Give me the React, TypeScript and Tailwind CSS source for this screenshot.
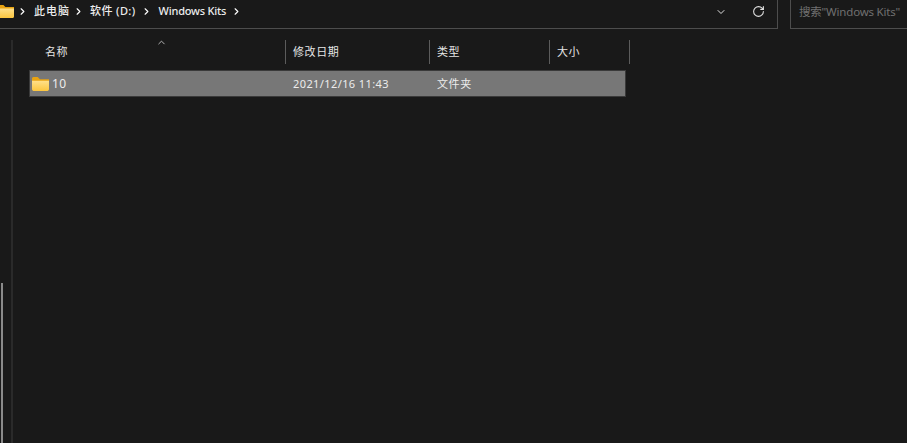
import { ChevronDown, ChevronRight, ChevronUp, RotateCw } from "lucide-react";

const Folder = ({ className, id }: { className: string; id: string }) => (
  <svg viewBox="0 0 16 13" className={className}>
    <defs>
      <linearGradient id={id} x1="0" y1="0" x2="0" y2="1">
        <stop offset="0" stopColor="#ffe08a" />
        <stop offset="1" stopColor="#fcc63f" />
      </linearGradient>
    </defs>
    <path d="M0 1.500C0 .7.6 0 1.400 0h4l2 2H16v2H0z" fill="#e8a311" />
    <path d="M0 3.500h16v8c0 .8-.6 1.500-1.400 1.500H1.400C.6 13 0 12.300 0 11.500z" fill={`url(#${id})`} />
  </svg>
);

const Crumb = ({ label, tracking, gap }: { label: string; tracking: string; gap: string }) => (
  <>
    <span className={`text-[11px] font-medium text-[#ececec] ${tracking}`}>{label}</span>
    <ChevronRight className={`h-[11px] w-[11px] text-white ${gap}`} strokeWidth={2.5} />
  </>
);

const Column = ({ label, width }: { label: string; width: string }) => (
  <div className={`flex h-[24px] items-center border-r border-[#5c5c5c] pt-[1px] pl-[7px] text-[11px] tracking-[0.6px] text-[#e6e6e6] ${width}`}>
    {label}
  </div>
);

export default function App() {
  return (
    <div className="flex h-[443px] w-[907px] flex-col overflow-hidden bg-[#191919] font-['Noto_Sans','Noto_Sans_CJK_SC',sans-serif]">
      <div className="flex h-[29px] shrink-0">
        <div className="flex w-[778px] items-center border-r border-b border-[#4d4d4d] pb-[5px]">
          <Folder id="nav-folder" className="ml-[-2px] h-[17px] w-[16px]" />
          <ChevronRight className="mr-[6px] ml-[3px] h-[11px] w-[11px] text-white" strokeWidth={2.5} />
          <Crumb label="此电脑" tracking="tracking-[1px]" gap="mr-[6px] ml-[3px]" />
          <Crumb label="软件 (D:)" tracking="tracking-[0.4px]" gap="mr-[7px] ml-[5px]" />
          <Crumb label="Windows Kits" tracking="tracking-[-0.2px]" gap="ml-[5px]" />
          <ChevronDown className="ml-auto h-[12px] w-[12px] text-[#e0e0e0]" />
          <RotateCw className="mr-[12px] ml-[25px] h-[13px] w-[13px] text-[#e0e0e0]" />
        </div>
        <div className="ml-[12px] flex flex-1 items-center border-b border-l border-[#4d4d4d] pb-[5px] pl-[8px] text-[11.5px] tracking-[-0.2px] text-[#707070]">
          搜索"Windows Kits"
        </div>
      </div>
      <div className="flex min-h-0 flex-1">
        <div className="flex w-[11px] shrink-0 flex-col justify-end pl-[1px]">
          <div className="h-[160px] w-[2px] bg-[#8a8a8a]" />
        </div>
        <div className="mt-[11px] w-[2px] shrink-0 bg-[#2a2a2a]" />
        <div className="flex-1 pl-[16px]">
          <div className="mt-[11px] flex h-[24px]">
            <div className="relative flex h-[24px] w-[257px] items-center border-r border-[#5c5c5c] pt-[1px] pl-[16px] text-[11px] tracking-[0.6px] text-[#e6e6e6]">
              名称
              <ChevronUp className="absolute top-[-3px] left-[127px] h-[11px] w-[11px] text-[#c0c0c0]" />
            </div>
            <Column label="修改日期" width="w-[144px]" />
            <Column label="类型" width="w-[120px]" />
            <Column label="大小" width="w-[80px]" />
          </div>
          <div className="mt-[6px] flex h-[27px] w-[597px] items-center border border-[#3a3a3a] bg-[#777777] text-[11px] text-[#ececec]">
            <Folder id="row-folder" className="ml-[2px] h-[14px] w-[17px]" />
            <span className="ml-[3px] w-[241px] pt-[1px] text-[12px] tracking-[0.3px]">10</span>
            <span className="w-[144px] pt-[1px] tracking-[0.4px]">2021/12/16 11:43</span>
            <span className="pt-[1px] tracking-[0.6px]">文件夹</span>
          </div>
        </div>
      </div>
    </div>
  );
}
